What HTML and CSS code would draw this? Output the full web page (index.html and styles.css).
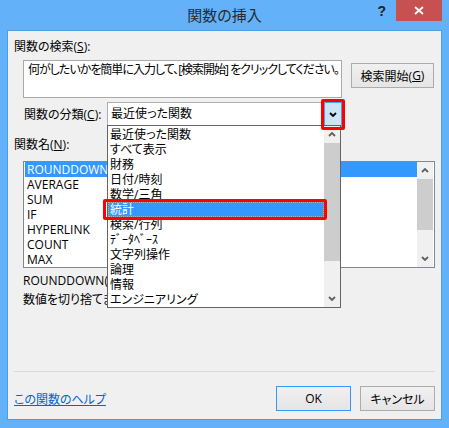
FILE: index.html
```html
<!DOCTYPE html>
<html lang="ja">
<head>
    <meta charset="UTF-8">
    <meta name="viewport" content="width=device-width, initial-scale=1.0">
    <title>関数の挿入</title>
    <link rel="stylesheet" href="styles.css">
</head>
<body>
    <div class="window">
        <div class="titlebar">
            <div></div>
            <div class="title">関数の挿入</div>
            <div class="title_buttons">
                <span class="help">?</span>
                <span class="close">
                    <svg width="10" height="9" viewBox="0 0 10 9"><path d="M1 1 L9 8 M9 1 L1 8" stroke="#fff" stroke-width="1.8" fill="none"/></svg>
                </span>
            </div>
        </div>
        <div class="client">
            <div class="label">関数の検索(<u>S</u>):</div>
            <div class="search_row">
                <div class="search_box">何がしたいかを簡単に入力して、[検索開始] をクリックしてください。</div>
                <div class="button search_button">検索開始(<u>G</u>)</div>
            </div>
            <div class="category_row">
                <div class="category_label">関数の分類(<u>C</u>):</div>
                <div class="combo">
                    <span class="combo_text">最近使った関数</span>
                    <div class="combo_button">
                        <svg width="8" height="5" viewBox="0 0 8 5"><path d="M1 1 L4 4 L7 1" fill="none" stroke="#000" stroke-width="1.8"/></svg>
                    </div>
                    <div class="mark combo_mark"></div>
                    <div class="dropdown">
                        <div class="dropdown_items">
                            <div class="item">最近使った関数</div>
                            <div class="item">すべて表示</div>
                            <div class="item">財務</div>
                            <div class="item">日付/時刻</div>
                            <div class="item">数学/三角</div>
                            <div class="item selected">統計<div class="mark item_mark"></div></div>
                            <div class="item">検索/行列</div>
                            <div class="item">ﾃﾞｰﾀﾍﾞｰｽ</div>
                            <div class="item">文字列操作</div>
                            <div class="item">論理</div>
                            <div class="item">情報</div>
                            <div class="item">エンジニアリング</div>
                        </div>
                        <div class="scrollbar">
                            <div class="scroll_arrow up">
                                <svg width="8" height="5" viewBox="0 0 8 5"><path d="M1 4 L4 1 L7 4" fill="none" stroke="#606060" stroke-width="1.8"/></svg>
                            </div>
                            <div class="thumb dropdown_thumb"></div>
                            <div class="track"></div>
                            <div class="scroll_arrow">
                                <svg width="8" height="5" viewBox="0 0 8 5"><path d="M1 1 L4 4 L7 1" fill="none" stroke="#606060" stroke-width="1.8"/></svg>
                            </div>
                        </div>
                    </div>
                </div>
            </div>
            <div class="label name_label">関数名(<u>N</u>):</div>
            <div class="func_list">
                <div class="func_rows">
                    <div class="row selected">ROUNDDOWN</div>
                    <div class="row">AVERAGE</div>
                    <div class="row">SUM</div>
                    <div class="row">IF</div>
                    <div class="row">HYPERLINK</div>
                    <div class="row">COUNT</div>
                    <div class="row">MAX</div>
                </div>
                <div class="scrollbar">
                    <div class="scroll_arrow up">
                        <svg width="8" height="5" viewBox="0 0 8 5"><path d="M1 4 L4 1 L7 4" fill="none" stroke="#606060" stroke-width="1.8"/></svg>
                    </div>
                    <div class="thumb list_thumb"></div>
                    <div class="track"></div>
                    <div class="scroll_arrow">
                        <svg width="8" height="5" viewBox="0 0 8 5"><path d="M1 1 L4 4 L7 1" fill="none" stroke="#606060" stroke-width="1.8"/></svg>
                    </div>
                </div>
            </div>
            <div class="desc">
                <div>ROUNDDOWN(数値,桁数)</div>
                <div>数値を切り捨てます。</div>
            </div>
            <div class="separator"></div>
            <div class="footer">
                <a class="help_link" href="#">この関数のヘルプ</a>
                <div class="button ok_button">OK</div>
                <div class="button cancel_button">キャンセル</div>
            </div>
        </div>
    </div>
</body>
</html>
```

FILE: styles.css
```css
body {
    margin: 0;
    font-family: "Open Sans", "Noto Sans CJK JP", sans-serif;
    font-size: 12px;
    font-feature-settings: "palt";
    color: #000;
}

.window {
    width: 449px;
    height: 428px;
    box-sizing: border-box;
    background-color: #63b1f8;
    padding: 0 7px 8px 7px;
}

.titlebar {
    height: 30px;
    display: grid;
    grid-template-columns: 1fr auto 1fr;
}

.title {
    font-size: 15px;
    line-height: 30px;
    color: #2b2b2b;
}

.title_buttons {
    display: flex;
    justify-content: flex-end;
    align-items: flex-start;
}

.help {
    font-family: "Liberation Sans", sans-serif;
    font-weight: bold;
    font-size: 14px;
    line-height: 14px;
    margin-top: 4px;
    margin-right: 10px;
    color: #222;
}

.close {
    width: 46px;
    height: 21px;
    background-color: #c75050;
    display: flex;
    align-items: center;
    justify-content: center;
}

.client {
    height: 390px;
    box-sizing: border-box;
    border: 1px solid #4e9de3;
    background-color: #f0f0f0;
    padding: 8px 6px 8px 6px;
}

.label {
    line-height: 15px;
    height: 15px;
}

u {
    text-decoration: underline;
    text-underline-offset: 1px;
}

.search_row {
    display: flex;
    align-items: flex-start;
    margin: 6px 0 0 9px;
}

/* the hint line has to fit on one row */
.search_box {
    width: 319px;
    height: 38px;
    box-sizing: border-box;
    border: 1px solid #a9a9a9;
    background-color: #fff;
    padding: 1px 4px;
    line-height: 15px;
    white-space: nowrap;
    overflow: hidden;
    letter-spacing: -1px;
}

.button {
    box-sizing: border-box;
    height: 25px;
    border: 1px solid #acacac;
    background: linear-gradient(#f0f0f0, #e5e5e5);
    display: flex;
    align-items: center;
    justify-content: center;
}

.search_button {
    width: 83px;
    margin: 3px 0 0 9px;
}

.category_row {
    display: flex;
    align-items: center;
    height: 24px;
    margin: 4px 0 0 10px;
}

.category_label {
    width: 83px;
}

.combo {
    position: relative;
    width: 235px;
    height: 24px;
    box-sizing: border-box;
    border: 1px solid #abadb3;
    background-color: #fff;
    padding-left: 3px;
    line-height: 22px;
}

.combo_button {
    position: absolute;
    right: -1px;
    top: -1px;
    width: 18px;
    height: 25px;
    box-sizing: border-box;
    border: 1px solid #569de5;
    background-color: #cce4f7;
    display: flex;
    align-items: center;
    justify-content: center;
}

.mark {
    position: absolute;
    border: 3px solid #ff0000;
    border-radius: 2px;
    box-sizing: border-box;
    z-index: 3;
}

.combo_mark {
    right: -4px;
    top: -4px;
    width: 24px;
    height: 31px;
}

.dropdown {
    position: absolute;
    left: -1px;
    top: 22px;
    width: 234px;
    height: 183px;
    box-sizing: border-box;
    border: 1px solid #646464;
    background-color: #fff;
    display: flex;
    z-index: 2;
}

.dropdown_items {
    flex: 1;
    padding-top: 1px;
}

.item {
    position: relative;
    height: 15px;
    line-height: 15px;
    padding-left: 2px;
}

.item.selected {
    background-color: #3399ff;
    color: #fff;
    outline: 1px dotted #e2a36a;
    outline-offset: -1px;
}

.item_mark {
    left: -5px;
    right: -3px;
    top: -3px;
    bottom: -3px;
}

.scrollbar {
    width: 16px;
    background-color: #f0f0f0;
    display: flex;
    flex-direction: column;
}

.scroll_arrow {
    height: 17px;
    display: flex;
    align-items: center;
    justify-content: center;
}

.thumb {
    background-color: #cdcdcd;
}

.dropdown_thumb {
    height: 118px;
}

.list_thumb {
    height: 51px;
}

.track {
    flex: 1;
}

.name_label {
    margin-top: 11px;
}

.func_list {
    display: flex;
    width: 412px;
    height: 107px;
    box-sizing: border-box;
    border: 1px solid #828790;
    background-color: #fff;
    padding: 0 1px;
    margin: 9px 0 0 9px;
}

.func_rows {
    flex: 1;
}

.row {
    height: 15px;
    line-height: 15px;
    padding-left: 2px;
}

.row.selected {
    background-color: #3399ff;
    color: #fff;
}

.desc {
    height: 100px;
    margin: 3px 0 0 9px;
    line-height: 19px;
    white-space: nowrap;
}

.separator {
    height: 1px;
    background-color: #dadada;
}

.footer {
    display: flex;
    align-items: center;
    height: 25px;
    margin-top: 14px;
}

.help_link {
    color: #0066cc;
    text-decoration: underline;
    margin-right: auto;
}

.ok_button {
    width: 75px;
    border-color: #3399ff;
}

.cancel_button {
    width: 75px;
    margin-left: 9px;
}
```
